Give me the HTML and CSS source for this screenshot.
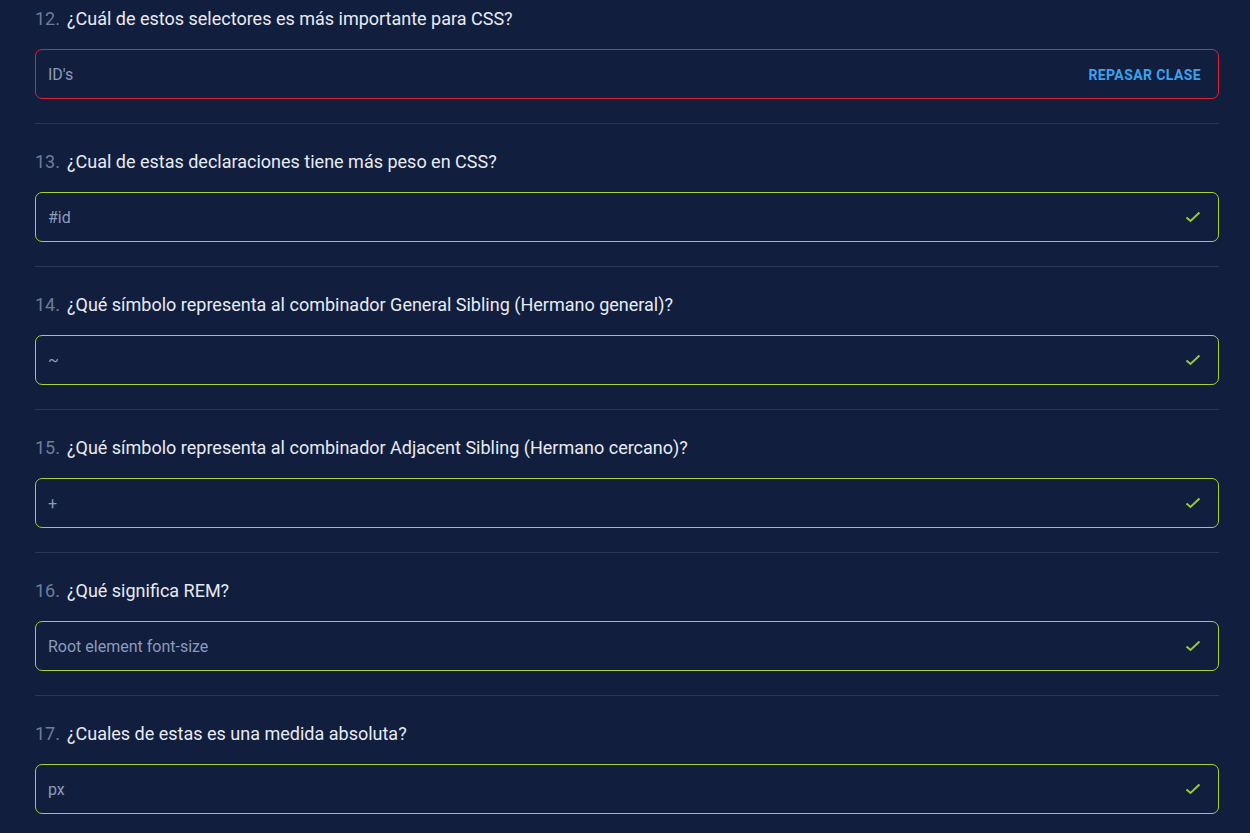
FILE: index.html
```html
<!DOCTYPE html>
<html lang="es">
<head>
<meta charset="utf-8">
<title>Quiz CSS</title>
<link rel="stylesheet" href="styles.css">
</head>
<body>
<main class="quiz">
  <section class="q">
    <h3 class="q-title"><span class="q-num">12.</span><span>¿Cuál de estos selectores es más importante para CSS?</span></h3>
    <div class="answer wrong"><span class="answer-text">ID's</span><a class="review" href="#">REPASAR CLASE</a></div>
  </section>
  <section class="q">
    <h3 class="q-title"><span class="q-num">13.</span><span>¿Cual de estas declaraciones tiene más peso en CSS?</span></h3>
    <div class="answer right"><span class="answer-text">#id</span><svg class="check" viewBox="0 0 16 12" width="16" height="12"><path d="M1.5 6.5 L5.5 10 L14.5 1.5" fill="none" stroke="currentColor" stroke-width="2"/></svg></div>
  </section>
  <section class="q">
    <h3 class="q-title"><span class="q-num">14.</span><span>¿Qué símbolo representa al combinador General Sibling (Hermano general)?</span></h3>
    <div class="answer right"><span class="answer-text">~</span><svg class="check" viewBox="0 0 16 12" width="16" height="12"><path d="M1.5 6.5 L5.5 10 L14.5 1.5" fill="none" stroke="currentColor" stroke-width="2"/></svg></div>
  </section>
  <section class="q">
    <h3 class="q-title"><span class="q-num">15.</span><span>¿Qué símbolo representa al combinador Adjacent Sibling (Hermano cercano)?</span></h3>
    <div class="answer right"><span class="answer-text">+</span><svg class="check" viewBox="0 0 16 12" width="16" height="12"><path d="M1.5 6.5 L5.5 10 L14.5 1.5" fill="none" stroke="currentColor" stroke-width="2"/></svg></div>
  </section>
  <section class="q">
    <h3 class="q-title"><span class="q-num">16.</span><span>¿Qué significa REM?</span></h3>
    <div class="answer right"><span class="answer-text">Root element font-size</span><svg class="check" viewBox="0 0 16 12" width="16" height="12"><path d="M1.5 6.5 L5.5 10 L14.5 1.5" fill="none" stroke="currentColor" stroke-width="2"/></svg></div>
  </section>
  <section class="q">
    <h3 class="q-title"><span class="q-num">17.</span><span>¿Cuales de estas es una medida absoluta?</span></h3>
    <div class="answer right"><span class="answer-text">px</span><svg class="check" viewBox="0 0 16 12" width="16" height="12"><path d="M1.5 6.5 L5.5 10 L14.5 1.5" fill="none" stroke="currentColor" stroke-width="2"/></svg></div>
  </section>
</main>
</body>
</html>
```
FILE: styles.css
```css
html, body {
  margin: 0;
  padding: 0;
  background: #111e3e;
}
body {
  font-family: Roboto, "Liberation Sans", Arial, sans-serif;
  color: #e6e9f0;
}
.quiz {
  padding: 7px 31px 0 35px;
  display: flex;
  flex-direction: column;
}
.q {
  padding-bottom: 24px;
  border-bottom: 1px solid #29355a;
  margin-bottom: 26px;
}
.q-title {
  margin: 0 0 18px;
  font-size: 18px;
  font-weight: 400;
  line-height: 24px;
  color: #e8ebf2;
  display: flex;
  gap: 7px;
}
.q-num {
  color: #6f7d9c;
}
.answer {
  height: 50px;
  box-sizing: border-box;
  border: 1px solid #a5d22f;
  border-radius: 7px;
  display: flex;
  align-items: center;
  justify-content: space-between;
  padding: 0 17px 0 12px;
}
.answer.wrong {
  border-color: #e2202f;
}
.answer-text {
  font-size: 16px;
  color: #8d9bbb;
}
.review {
  color: #3aa3ee;
  font-weight: 700;
  font-size: 14px;
  letter-spacing: 0.4px;
  text-decoration: none;
  padding-top: 2px;
  margin-right: 0;
}
.check {
  color: #97c93a;
  display: block;
}
```
